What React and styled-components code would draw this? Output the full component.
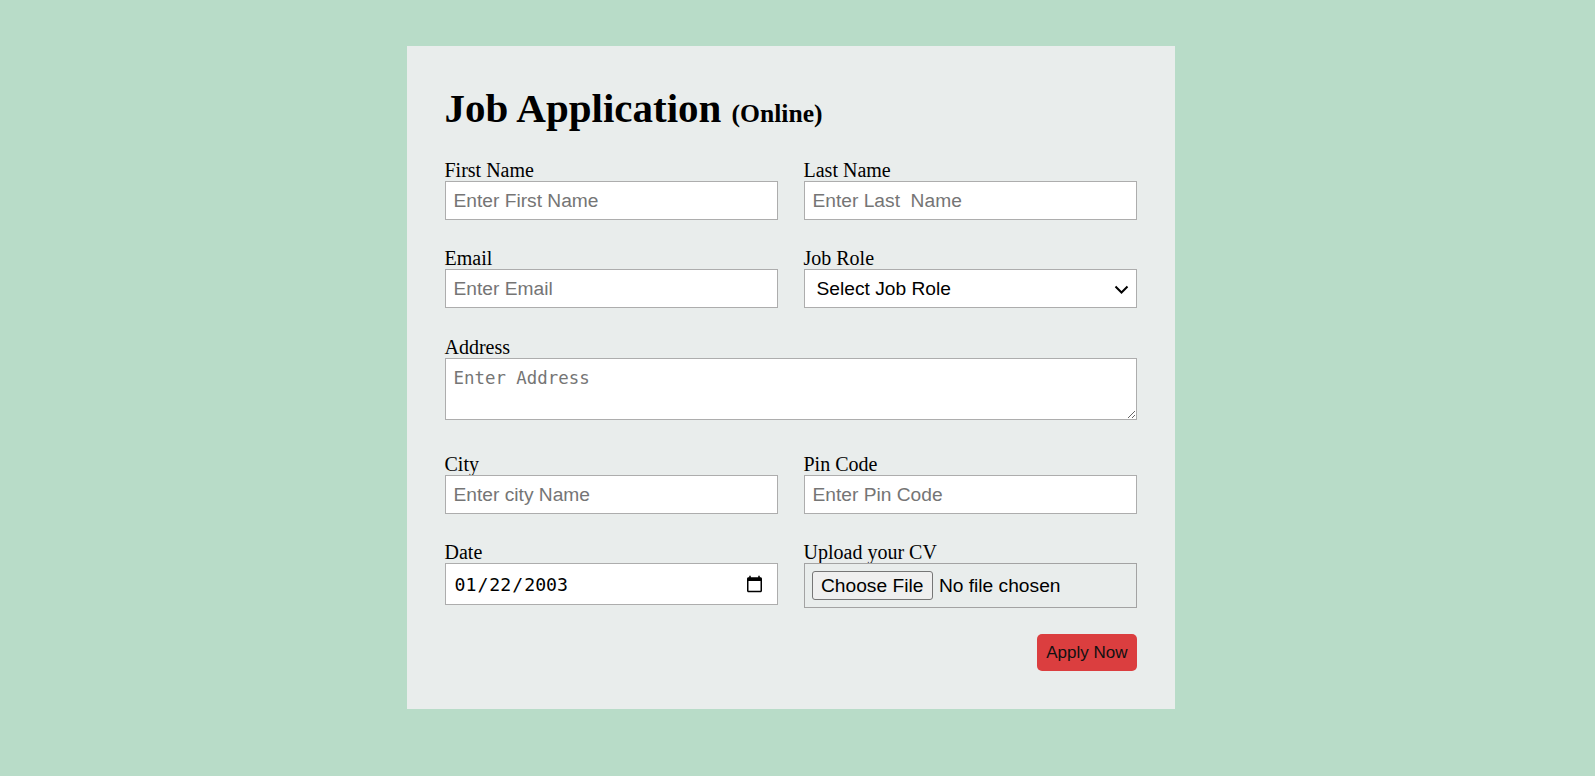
import styled, { createGlobalStyle } from 'styled-components';

const GlobalStyle = createGlobalStyle`
    html, body {
        margin: 0;
        padding: 0;
        background-color: #b8dcc8;
    }
    body {
        font-family: "Liberation Serif", "Times New Roman", serif;
    }
`;

const Page = styled.div`
    min-height: 776px;
    padding-top: 46px;
    box-sizing: border-box;
`;

const Card = styled.form`
    width: 768px;
    box-sizing: border-box;
    margin-left: calc((100% - 768px) / 2 - 7px);
    padding: 40px 38px 38px;
    background-color: #e9edec;
`;

const Title = styled.h1`
    margin: 0 0 29px;
    font-size: 41px;
    line-height: 44px;
    font-weight: bold;
    color: #000;
`;

const Sub = styled.span`
    font-size: 25.6px;
    line-height: 1;
`;

const Grid = styled.div`
    display: grid;
    grid-template-columns: 333px 333px;
    column-gap: 26px;
    row-gap: 27px;
`;

const Field = styled.div`
    display: flex;
    flex-direction: column;
    grid-column: ${(p) => (p.$wide ? '1 / -1' : 'auto')};
    margin-top: ${(p) => (p.$wide ? '1px' : '0')};
    padding-bottom: ${(p) => (p.$wide ? '6px' : '0')};
`;

const Label = styled.label`
    font-size: 20px;
    line-height: 22px;
    color: #000;
`;

const Input = styled.input`
    box-sizing: border-box;
    width: 100%;
    height: ${(p) => p.$h || '39px'};
    margin: 0;
    padding: 0 8px;
    border: 1px solid #adadad;
    border-radius: 0;
    background: #fff;
    font-family: "Liberation Sans", Arial, sans-serif;
    font-size: 19.2px;
    color: #000;
    outline: none;

    &::placeholder {
        color: #757575;
    }
`;

const DateInput = styled(Input)`
    font-family: "DejaVu Sans Mono", "Liberation Mono", monospace;
    font-size: 18.2px;
    padding: 0 11px 0 8px;
`;

const SelectWrap = styled.div`
    position: relative;
    width: 100%;
`;

const Select = styled.select`
    box-sizing: border-box;
    width: 100%;
    height: 39px;
    margin: 0;
    padding: 0 30px 0 12px;
    border: 1px solid #adadad;
    border-radius: 0;
    background: #fff;
    appearance: none;
    font-family: "Liberation Sans", Arial, sans-serif;
    font-size: 19.2px;
    color: #000;
    outline: none;
`;

const Chevron = styled.svg`
    position: absolute;
    right: 8px;
    top: 16px;
    width: 15px;
    height: 9px;
    pointer-events: none;
`;

const TextArea = styled.textarea`
    display: block;
    box-sizing: border-box;
    width: 100%;
    height: 62px;
    margin: 0;
    padding: 9px 8px;
    border: 1px solid #adadad;
    border-radius: 0;
    background: #fff;
    font-family: "DejaVu Sans Mono", "Liberation Mono", monospace;
    font-size: 17.4px;
    line-height: 20px;

    &::placeholder {
        color: #757575;
    }
`;

const FileInput = styled.input`
    box-sizing: border-box;
    width: 100%;
    height: 45px;
    margin: 0;
    padding: 7px;
    border: 1px solid #a3a3a3;
    background: transparent;
    font-family: "Liberation Sans", Arial, sans-serif;
    font-size: 19.2px;
    color: #000;

    &::file-selector-button {
        height: 29px;
        margin: 0 6px 0 0;
        padding: 0 8.5px;
        border: 1px solid #767676;
        border-radius: 3px;
        background: #efefef;
        font-family: "Liberation Sans", Arial, sans-serif;
        font-size: 19.2px;
        color: #000;
    }
`;

const Actions = styled.div`
    display: flex;
    justify-content: flex-end;
    margin-top: 26px;
`;

const Button = styled.button`
    height: 37px;
    padding: 0 9px;
    border: none;
    border-radius: 5px;
    background-color: #db3e3f;
    color: #111;
    font-family: "Liberation Sans", Arial, sans-serif;
    font-size: 17px;
    cursor: pointer;
`;

const App = () => {
  return (
    <Page>
        <GlobalStyle />
        <Card onSubmit={(e) => e.preventDefault()}>
            <Title>
                Job Application <Sub>(Online)</Sub>
            </Title>
            <Grid>
                <Field>
                    <Label htmlFor="fname">First Name</Label>
                    <Input id="fname" type="text" placeholder="Enter First Name" />
                </Field>
                <Field>
                    <Label htmlFor="lname">Last Name</Label>
                    <Input id="lname" type="text" placeholder="Enter Last  Name" />
                </Field>
                <Field>
                    <Label htmlFor="email">Email</Label>
                    <Input id="email" type="email" placeholder="Enter Email" />
                </Field>
                <Field>
                    <Label htmlFor="role">Job Role</Label>
                    <SelectWrap>
                        <Select id="role" defaultValue="">
                            <option value="">Select Job Role</option>
                            <option value="frontend">Frontend Developer</option>
                            <option value="backend">Backend Developer</option>
                            <option value="fullstack">Full Stack Developer</option>
                        </Select>
                        <Chevron viewBox="0 0 15 9" fill="none">
                            <path d="M1.5 1.5 L7.5 7.5 L13.5 1.5" stroke="#000" strokeWidth="2" />
                        </Chevron>
                    </SelectWrap>
                </Field>
                <Field $wide>
                    <Label htmlFor="address">Address</Label>
                    <TextArea id="address" placeholder="Enter Address" />
                </Field>
                <Field>
                    <Label htmlFor="city">City</Label>
                    <Input id="city" type="text" placeholder="Enter city Name" />
                </Field>
                <Field>
                    <Label htmlFor="pin">Pin Code</Label>
                    <Input id="pin" type="text" placeholder="Enter Pin Code" />
                </Field>
                <Field>
                    <Label htmlFor="date">Date</Label>
                    <DateInput id="date" type="date" defaultValue="2003-01-22" $h="42px" />
                </Field>
                <Field>
                    <Label htmlFor="cv">Upload your CV</Label>
                    <FileInput id="cv" type="file" />
                </Field>
            </Grid>
            <Actions>
                <Button type="submit">Apply Now</Button>
            </Actions>
        </Card>
    </Page>
  )
};

export default App;
